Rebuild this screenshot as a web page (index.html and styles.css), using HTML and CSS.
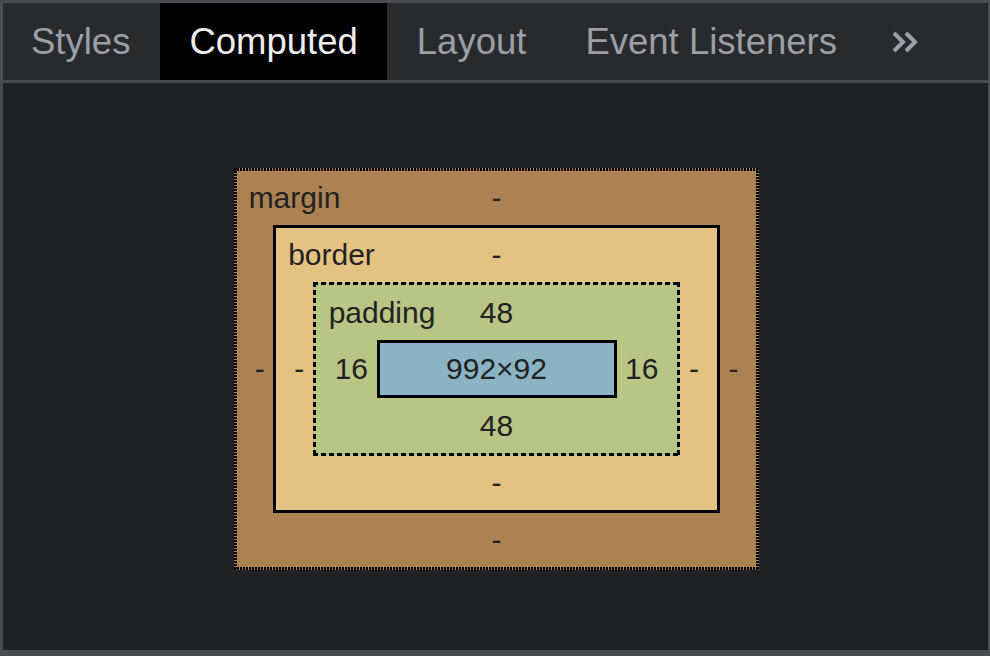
FILE: index.html
```html
<!DOCTYPE html>
<html lang="en">
<head>
<meta charset="utf-8">
<title>Computed</title>
<link rel="stylesheet" href="styles.css">
</head>
<body>
<div class="panel">
  <nav class="tabs">
    <div class="tab">Styles</div>
    <div class="tab active">Computed</div>
    <div class="tab">Layout</div>
    <div class="tab">Event Listeners</div>
    <div class="more">
      <svg width="28" height="24" viewBox="0 0 28 24" aria-hidden="true">
        <path d="M3 3 L12 12 L3 21 M15 3 L24 12 L15 21" fill="none" stroke="#9aa0a6" stroke-width="4"/>
      </svg>
    </div>
  </nav>
  <main class="content">
    <div class="bm bm-margin">
      <div class="row-top"><span class="label">margin</span><span>-</span><span></span></div>
      <div class="row-mid">
        <span>-</span>
        <div class="bm bm-border">
          <div class="row-top"><span class="label">border</span><span>-</span><span></span></div>
          <div class="row-mid">
            <span>-</span>
            <div class="bm bm-padding">
              <div class="row-top"><span class="label">padding</span><span>48</span><span></span></div>
              <div class="row-mid">
                <span>16</span>
                <div class="bm-content">992×92</div>
                <span>16</span>
              </div>
              <div class="row-bottom">48</div>
            </div>
            <span>-</span>
          </div>
          <div class="row-bottom">-</div>
        </div>
        <span>-</span>
      </div>
      <div class="row-bottom">-</div>
    </div>
  </main>
</div>
</body>
</html>
```

FILE: styles.css
```css
html, body {
  margin: 0;
  padding: 0;
  background: #4b4c50;
}

.panel {
  box-sizing: border-box;
  width: 990px;
  height: 656px;
  border-style: solid;
  border-color: #4b4c50;
  border-width: 3px 2px 6px 3px;
  display: flex;
  flex-direction: column;
  font-family: "Liberation Sans", Arial, sans-serif;
}

.tabs {
  flex: none;
  height: 77px;
  background: #292a2d;
  border-bottom: 3px solid #4b4c50;
  display: flex;
  align-items: stretch;
}

.tab {
  display: flex;
  align-items: center;
  padding: 0 29.5px;
  font-size: 36.5px;
  color: #9aa0a6;
  white-space: nowrap;
}

.tab:first-child {
  padding-left: 28px;
}

.tab.active {
  background: #000;
  color: #ededed;
}

.more {
  display: flex;
  align-items: center;
  padding-left: 24px;
}

.more svg {
  display: block;
}

.content {
  flex: 1;
  background: #202124;
  display: flex;
  align-items: center;
  justify-content: center;
  padding: 5px 0 0 2px;
}

.bm {
  display: flex;
  flex-direction: column;
  padding: 3px;
  color: #222;
  font-size: 30px;
}

.bm-margin {
  background:
    linear-gradient(90deg, #000 2px, transparent 2px) left top / 3px 3px repeat-x,
    linear-gradient(90deg, #000 2px, transparent 2px) left bottom / 3px 3px repeat-x,
    linear-gradient(180deg, #000 2px, transparent 2px) left top / 3px 3px repeat-y,
    linear-gradient(180deg, #000 2px, transparent 2px) right top / 3px 3px repeat-y,
    #ad8253;
}

.bm-border {
  padding: 0;
  border: 3px solid #000;
  background: #e4c382;
}

.bm-padding {
  background:
    linear-gradient(90deg, #000 5px, transparent 5px) left top / 8px 3px repeat-x,
    linear-gradient(90deg, #000 5px, transparent 5px) left bottom / 8px 3px repeat-x,
    linear-gradient(180deg, #000 5px, transparent 5px) left top / 3px 8px repeat-y,
    linear-gradient(180deg, #000 5px, transparent 5px) right top / 3px 8px repeat-y,
    #b9c585;
}

.row-top {
  display: grid;
  grid-template-columns: 1fr auto 1fr;
  height: 54px;
  line-height: 54px;
  white-space: nowrap;
}

.label {
  padding-left: 12px;
}

.bm-padding .label {
  padding-left: 13px;
}

.row-bottom {
  height: 54px;
  line-height: 54px;
  text-align: center;
}

.bm-padding > .row-top,
.bm-padding > .row-bottom {
  height: 55px;
  line-height: 55px;
}

.row-mid {
  display: flex;
  align-items: center;
  justify-content: center;
  padding: 0 18px;
  gap: 8.5px;
}

.bm-padding > .row-mid {
  padding: 0 19px;
}

.bm-content {
  width: 234px;
  height: 52px;
  line-height: 52px;
  text-align: center;
  border: 3px solid #000;
  background: #8ab4c4;
}
```
